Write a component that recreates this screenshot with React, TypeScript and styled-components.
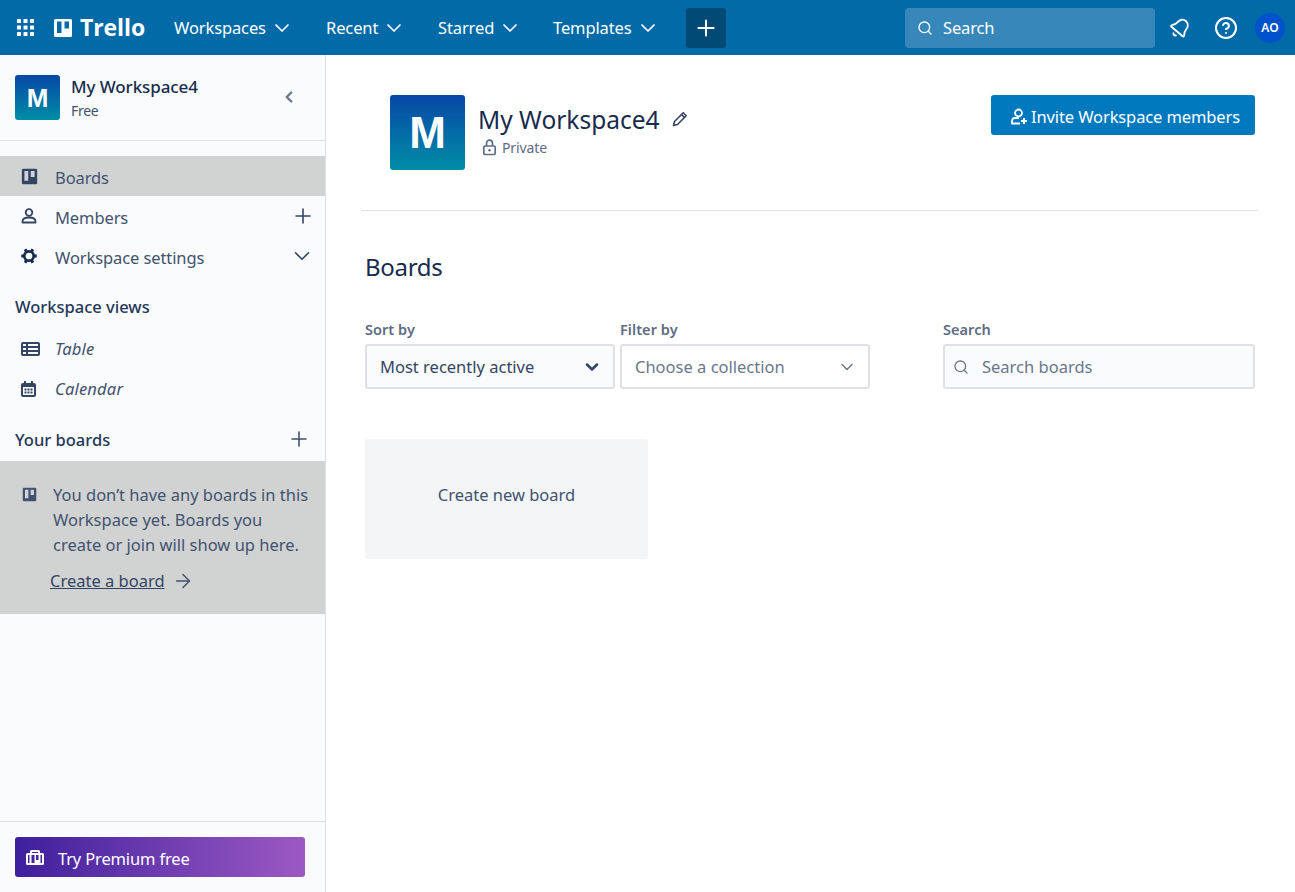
import React from "react";
import styled, { createGlobalStyle } from "styled-components";
import { ChevronDown, ChevronLeft, Plus, Search, HelpCircle, Bell, ArrowRight } from "lucide-react";

const FONT = `"Noto Sans", "Open Sans", "Liberation Sans", sans-serif`;

const Global = createGlobalStyle`
  html, body { margin: 0; padding: 0; background: #fff; }
  body { font-family: ${FONT}; color: #172b4d; overflow: hidden; }
  * { box-sizing: border-box; }
`;

const Page = styled.div`
  width: 1295px;
  height: 892px;
  display: flex;
  flex-direction: column;
`;

const TopBar = styled.header`
  height: 55px;
  flex: none;
  background: #026aa7;
  display: flex;
  align-items: center;
  color: #fff;
  padding-left: 17px;
`;

const Logo = styled.div`
  display: flex;
  align-items: center;
  gap: 7px;
  margin-left: 19px;
  width: 121px;
`;

const Wordmark = styled.span`
  font: 700 23px/1 "Open Sans", ${FONT};
  letter-spacing: -0.1px;
`;

const NavItem = styled.div<{ $w: number }>`
  width: ${(p) => p.$w}px;
  display: flex;
  align-items: center;
  gap: 4px;
  font-size: 16.5px;
  letter-spacing: -0.12px;
  white-space: nowrap;
`;

const AddButton = styled.div`
  width: 40px;
  height: 40px;
  border-radius: 3px;
  background: #014a75;
  display: flex;
  align-items: center;
  justify-content: center;
`;

const TopSearch = styled.div`
  margin-left: 179px;
  width: 250px;
  height: 40px;
  border-radius: 4px;
  background: #3787ba;
  display: flex;
  align-items: center;
  gap: 10px;
  padding-left: 12px;
  font-size: 16.5px;
  letter-spacing: -0.15px;
`;

const TopIcons = styled.div`
  display: flex;
  align-items: center;
  margin-left: 14px;
  gap: 23px;
`;

const Avatar = styled.div`
  width: 30px;
  height: 30px;
  margin-left: -6px;
  border-radius: 50%;
  background: #0052cc;
  display: flex;
  align-items: center;
  justify-content: center;
  font-size: 12px;
  font-weight: 600;
`;

const Body = styled.div`
  flex: 1;
  display: flex;
  min-height: 0;
`;

const Sidebar = styled.aside`
  width: 326px;
  flex: none;
  background: #fafbfc;
  border-right: 1px solid #dfe1e6;
  display: flex;
  flex-direction: column;
`;

const SideHeader = styled.div`
  height: 86px;
  border-bottom: 1px solid #dcdfe4;
  padding: 20px 15px 0;
  display: flex;
  align-items: flex-start;
  gap: 11px;
  flex: none;
`;

const WsLogo = styled.div<{ $size: number; $font: number }>`
  width: ${(p) => p.$size}px;
  height: ${(p) => p.$size}px;
  flex: none;
  border-radius: 3px;
  background: linear-gradient(#0747a6, #008da6);
  color: #fff;
  display: flex;
  align-items: center;
  justify-content: center;
  font: 700 ${(p) => p.$font}px/1 "Liberation Sans", sans-serif;
`;

const WsMeta = styled.div`
  flex: 1;
`;

const WsName = styled.div`
  font-size: 17px;
  line-height: 24px;
  font-weight: 500;
  letter-spacing: -0.1px;
`;

const WsPlan = styled.div`
  font-size: 14px;
  line-height: 24px;
  color: #42526e;
  letter-spacing: -0.3px;
`;

const Collapse = styled.div`
  color: #6b778c;
  margin: 13px 12px 0 0;
  display: flex;
`;

const RowLabel = styled.span`
  flex: 1;
`;

const ViewLabel = styled(RowLabel)`
  font-style: italic;
  letter-spacing: 0.2px;
  padding-bottom: 2px;
`;

const NavList = styled.nav`
  padding-top: 15px;
  display: flex;
  flex-direction: column;

  ${RowLabel} {
    padding-top: 2px;
  }
`;

const NavRow = styled.div<{ $active?: boolean }>`
  height: 40px;
  display: flex;
  align-items: center;
  padding: 0 10px 0 21px;
  background: ${(p) => (p.$active ? "#d1d3d3" : "transparent")};
  color: #42526e;
  font-size: 16.5px;
  letter-spacing: -0.1px;
`;

const RowIcon = styled.span`
  width: 34px;
  flex: none;
  display: flex;
  color: #344563;
`;

const SectionTitle = styled.div<{ $mt: number; $mb: number }>`
  display: flex;
  align-items: center;
  justify-content: space-between;
  padding: 0 14px 2px 15px;
  margin: ${(p) => p.$mt}px 0 ${(p) => p.$mb}px;
  height: 24px;
  font-size: 16.5px;
  font-weight: 500;
  color: #253858;
`;

const EmptyBoards = styled.div`
  height: 153px;
  background: #d1d3d3;
  padding: 21px 0 0 22px;
  display: flex;
  gap: 16px;
  flex: none;
`;

const EmptyIcon = styled.span`
  margin-top: 5px;
  height: 15px;
  display: flex;
`;

const EmptyText = styled.div`
  font-size: 16.5px;
  line-height: 25px;
  color: #42526e;
`;

const CreateLink = styled.div`
  display: flex;
  align-items: center;
  gap: 7px;
  margin: 11px 0 0 -3px;
  color: #42526e;
`;

const LinkText = styled.span`
  color: #344563;
  text-decoration: underline;
`;

const SideFooter = styled.div`
  margin-top: auto;
  height: 71px;
  flex: none;
  border-top: 1px solid #dcdfe4;
  padding: 15px 20px 0 15px;
`;

const Premium = styled.div`
  height: 40px;
  border-radius: 3px;
  background: linear-gradient(90deg, #3e1f9c 0%, #9c59c3 100%);
  color: #fff;
  display: flex;
  align-items: center;
  gap: 14px;
  padding: 2px 0 0 11px;
  font-size: 16.5px;
  letter-spacing: -0.15px;
`;

const Main = styled.main`
  flex: 1;
  padding: 40px 40px 0 35px;
  min-width: 0;
`;

const WsHeader = styled.section`
  height: 116px;
  margin-right: -3px;
  border-bottom: 1px solid #dfe1e6;
  display: flex;
  align-items: flex-start;
  padding-left: 29px;
  padding-right: 3px;
`;

const WsTitleBlock = styled.div`
  margin-left: 13px;
  flex: 1;
`;

const TitleRow = styled.div`
  display: flex;
  align-items: center;
  gap: 12px;
  height: 50px;
  margin-top: -1px;
  color: #172b4d;
  font-size: 24.5px;
`;

const Privacy = styled.div`
  display: flex;
  align-items: center;
  gap: 5px;
  margin: -6px 0 0 4px;
  font-size: 14px;
  color: #5e6c84;
  letter-spacing: -0.1px;
`;

const InviteButton = styled.div`
  width: 264px;
  height: 40px;
  border-radius: 3px;
  background: #0079bf;
  color: #fff;
  display: flex;
  align-items: center;
  justify-content: center;
  gap: 3px;
  padding: 3px 0 0 4px;
  font-size: 16.5px;
  letter-spacing: -0.12px;
`;

const Content = styled.section`
  padding-left: 4px;
`;

const Heading = styled.h2`
  margin: 38px 0 0;
  font-size: 24px;
  line-height: 36px;
  font-weight: 400;
  letter-spacing: -0.3px;
  color: #172b4d;
`;

const Filters = styled.div`
  display: flex;
  margin-top: 34px;
`;

const Field = styled.div<{ $w: number; $mr: number }>`
  width: ${(p) => p.$w}px;
  margin-right: ${(p) => p.$mr}px;
`;

const FieldLabel = styled.div`
  font-size: 14.5px;
  line-height: 20px;
  font-weight: 600;
  color: #5e6c84;
  letter-spacing: 0.05px;
  margin-bottom: 5px;
`;

const Control = styled.div<{ $bg: string; $color: string }>`
  height: 45px;
  border: 2px solid #dfe1e6;
  border-radius: 3px;
  background: ${(p) => p.$bg};
  color: ${(p) => p.$color};
  display: flex;
  align-items: center;
  justify-content: space-between;
  padding: 0 11px 0 13px;
  font-size: 16.5px;
`;

const SearchControl = styled(Control)`
  justify-content: flex-start;
  gap: 13px;
  padding: 0 8px;
`;

const NewBoard = styled.div`
  width: 283px;
  height: 120px;
  margin-top: 50px;
  padding-bottom: 10px;
  border-radius: 3px;
  background: #f4f5f7;
  color: #42526e;
  display: flex;
  align-items: center;
  justify-content: center;
  font-size: 16.5px;
`;

const Dots = () => (
  <svg width="17" height="17" viewBox="0 0 17 17" fill="#fff">
    {[0, 6.5, 13].flatMap((y) =>
      [0, 6.5, 13].map((x) => <rect key={`${x}-${y}`} x={x} y={y} width="4" height="4" rx="0.6" />)
    )}
  </svg>
);

const BoardGlyph = ({ size, color }: { size: number; color: string }) => (
  <svg width={size} height={size} viewBox="0 0 20 20">
    <path
      fillRule="evenodd"
      fill={color}
      d="M2.500 1h15A1.500 1.500 0 0 1 19 2.500v15a1.500 1.500 0 0 1-1.500 1.500h-15A1.500 1.500 0 0 1 1 17.500v-15A1.500 1.500 0 0 1 2.500 1zM4 3.500v11.500h4.500V3.500zM11.500 3.500V10.500H16V3.500z"
    />
  </svg>
);

const Gear = () => (
  <svg width="16" height="16" viewBox="0 0 16 16">
    <circle cx="8" cy="8" r="4.700" fill="none" stroke="#172b4d" strokeWidth="2.700" />
    {[0, 60, 120, 180, 240, 300].map((a) => (
      <rect key={a} x="6.500" y="0.300" width="3" height="3" fill="#172b4d" transform={`rotate(${a + 30} 8 8)`} />
    ))}
  </svg>
);

const TableIcon = () => (
  <svg width="19" height="14" viewBox="0 0 19 14" fill="#344563">
    <path
      fillRule="evenodd"
      d="M2 0h15a2 2 0 0 1 2 2v10a2 2 0 0 1-2 2H2a2 2 0 0 1-2-2V2a2 2 0 0 1 2-2zM2 2v2h3V2zM7 2v2h10V2zM2 6v2h3V6zM7 6v2h10V6zM2 10v2h3v-2zM7 10v2h10v-2z"
    />
  </svg>
);

const CalendarIcon = () => (
  <svg width="15" height="16" viewBox="0 0 15 16" fill="#344563">
    <path
      fillRule="evenodd"
      d="M3 0h2v2h5V0h2v2h1a2 2 0 0 1 2 2v10a2 2 0 0 1-2 2H2a2 2 0 0 1-2-2V4a2 2 0 0 1 2-2h1zM2 6v8h11V6zM3.500 7.500h2v2h-2zM6.500 7.500h2v2h-2zM9.500 7.500h2v2h-2zM3.500 10.500h2v2h-2zM6.500 10.500h2v2h-2zM9.500 10.500h2v2h-2z"
    />
  </svg>
);

const Briefcase = () => (
  <svg width="18" height="16" viewBox="0 0 18 16" fill="#fff">
    <path
      fillRule="evenodd"
      d="M5.500 0h7A1.500 1.500 0 0 1 14 1.500V3h2.500A1.500 1.500 0 0 1 18 4.500v9a1.500 1.500 0 0 1-1.500 1.500h-15A1.500 1.500 0 0 1 0 13.500v-9A1.500 1.500 0 0 1 1.500 3H4V1.500A1.500 1.500 0 0 1 5.500 0zM6 2v1h6V2zM2 5v8h1.500V5zM5.500 5v8h3V5zM10 5v5h2.500V5zM14.500 5v8H16V5z"
    />
  </svg>
);

const MemberIcon = () => (
  <svg width="16" height="16" viewBox="0 0 16 16" fill="none" stroke="#344563" strokeWidth="1.800">
    <circle cx="8" cy="4.500" r="3.300" />
    <path d="M1.500 14.500v-1c0-2.500 2.500-4 6.500-4s6.500 1.500 6.500 4v1z" strokeLinejoin="round" />
  </svg>
);

const InviteIcon = () => (
  <svg width="18" height="18" viewBox="0 0 18 18" fill="none" stroke="#fff" strokeWidth="1.800">
    <circle cx="8.500" cy="5" r="3.500" />
    <path d="M9 10H5c-2 0-3 1.300-3 3v2.500h8" strokeLinejoin="round" />
    <path d="M14 10v6M11 13h6" strokeWidth="1.900" />
  </svg>
);

const PencilIcon = () => (
  <svg width="16" height="16" viewBox="0 0 16 16" fill="none" stroke="#344563" strokeWidth="1.600" strokeLinejoin="round">
    <path d="M11.200 1.800l3 3L5.500 13.500l-4 1 1-4z" />
    <path d="M9.500 3.500l3 3" />
  </svg>
);

const LockIcon = () => (
  <svg width="15" height="17" viewBox="0 0 15 17" fill="none" stroke="#5e6c84" strokeWidth="1.700">
    <path d="M4.500 7V4.200a3 3 0 0 1 6 0V7" />
    <rect x="1.800" y="7" width="11.400" height="8.500" rx="1.200" />
    <circle cx="7.500" cy="11.200" r="1.200" fill="#5e6c84" stroke="none" />
  </svg>
);

export default function App() {
  return (
    <Page>
      <Global />
      <TopBar>
        <Dots />
        <Logo>
          <BoardGlyph size={20} color="#fff" />
          <Wordmark>Trello</Wordmark>
        </Logo>
        <NavItem $w={152}>
          Workspaces <ChevronDown size={24} strokeWidth={1.700} />
        </NavItem>
        <NavItem $w={112}>
          Recent <ChevronDown size={24} strokeWidth={1.700} />
        </NavItem>
        <NavItem $w={115}>
          Starred <ChevronDown size={24} strokeWidth={1.700} />
        </NavItem>
        <NavItem $w={133}>
          Templates <ChevronDown size={24} strokeWidth={1.700} />
        </NavItem>
        <AddButton>
          <Plus size={26} strokeWidth={1.800} />
        </AddButton>
        <TopSearch>
          <Search size={16} strokeWidth={2} />
          Search
        </TopSearch>
        <TopIcons>
          <Bell size={22} strokeWidth={2} style={{ transform: "rotate(40deg)" }} />
          <HelpCircle size={24} strokeWidth={2} />
          <Avatar>AO</Avatar>
        </TopIcons>
      </TopBar>
      <Body>
        <Sidebar>
          <SideHeader>
            <WsLogo $size={45} $font={26}>M</WsLogo>
            <WsMeta>
              <WsName>My Workspace4</WsName>
              <WsPlan>Free</WsPlan>
            </WsMeta>
            <Collapse>
              <ChevronLeft size={18} strokeWidth={3.200} />
            </Collapse>
          </SideHeader>
          <NavList>
            <NavRow $active>
              <RowIcon><BoardGlyph size={17} color="#344563" /></RowIcon>
              <RowLabel>Boards</RowLabel>
            </NavRow>
            <NavRow>
              <RowIcon><MemberIcon /></RowIcon>
              <RowLabel>Members</RowLabel>
              <Plus size={24} strokeWidth={1.600} color="#344563" />
            </NavRow>
            <NavRow>
              <RowIcon><Gear /></RowIcon>
              <RowLabel>Workspace settings</RowLabel>
              <ChevronDown size={26} strokeWidth={1.500} color="#344563" />
            </NavRow>
          </NavList>
          <SectionTitle $mt={19} $mb={10}>Workspace views</SectionTitle>
          <NavRow>
            <RowIcon><TableIcon /></RowIcon>
            <ViewLabel>Table</ViewLabel>
          </NavRow>
          <NavRow>
            <RowIcon><CalendarIcon /></RowIcon>
            <ViewLabel>Calendar</ViewLabel>
          </NavRow>
          <SectionTitle $mt={19} $mb={9}>
            Your boards
            <Plus size={24} strokeWidth={1.600} color="#42526e" />
          </SectionTitle>
          <EmptyBoards>
            <EmptyIcon><BoardGlyph size={15} color="#42526e" /></EmptyIcon>
            <EmptyText>
              You don’t have any boards in this
              <br />
              Workspace yet. Boards you
              <br />
              create or join will show up here.
              <CreateLink>
                <LinkText>Create a board</LinkText>
                <ArrowRight size={22} strokeWidth={1.600} />
              </CreateLink>
            </EmptyText>
          </EmptyBoards>
          <SideFooter>
            <Premium>
              <Briefcase />
              Try Premium free
            </Premium>
          </SideFooter>
        </Sidebar>
        <Main>
          <WsHeader>
            <WsLogo $size={75} $font={44}>M</WsLogo>
            <WsTitleBlock>
              <TitleRow>
                My Workspace4
                <PencilIcon />
              </TitleRow>
              <Privacy>
                <LockIcon />
                Private
              </Privacy>
            </WsTitleBlock>
            <InviteButton>
              <InviteIcon />
              Invite Workspace members
            </InviteButton>
          </WsHeader>
          <Content>
            <Heading>Boards</Heading>
            <Filters>
              <Field $w={250} $mr={5}>
                <FieldLabel>Sort by</FieldLabel>
                <Control $bg="#fafbfc" $color="#344563">
                  Most recently active
                  <ChevronDown size={20} strokeWidth={3} color="#344563" />
                </Control>
              </Field>
              <Field $w={250} $mr={73}>
                <FieldLabel>Filter by</FieldLabel>
                <Control $bg="#fff" $color="#6b778c">
                  Choose a collection
                  <ChevronDown size={20} strokeWidth={1.800} color="#6b778c" />
                </Control>
              </Field>
              <Field $w={312} $mr={0}>
                <FieldLabel>Search</FieldLabel>
                <SearchControl $bg="#fafbfc" $color="#6b778c">
                  <Search size={16} strokeWidth={2} />
                  Search boards
                </SearchControl>
              </Field>
            </Filters>
            <NewBoard>Create new board</NewBoard>
          </Content>
        </Main>
      </Body>
    </Page>
  );
}
